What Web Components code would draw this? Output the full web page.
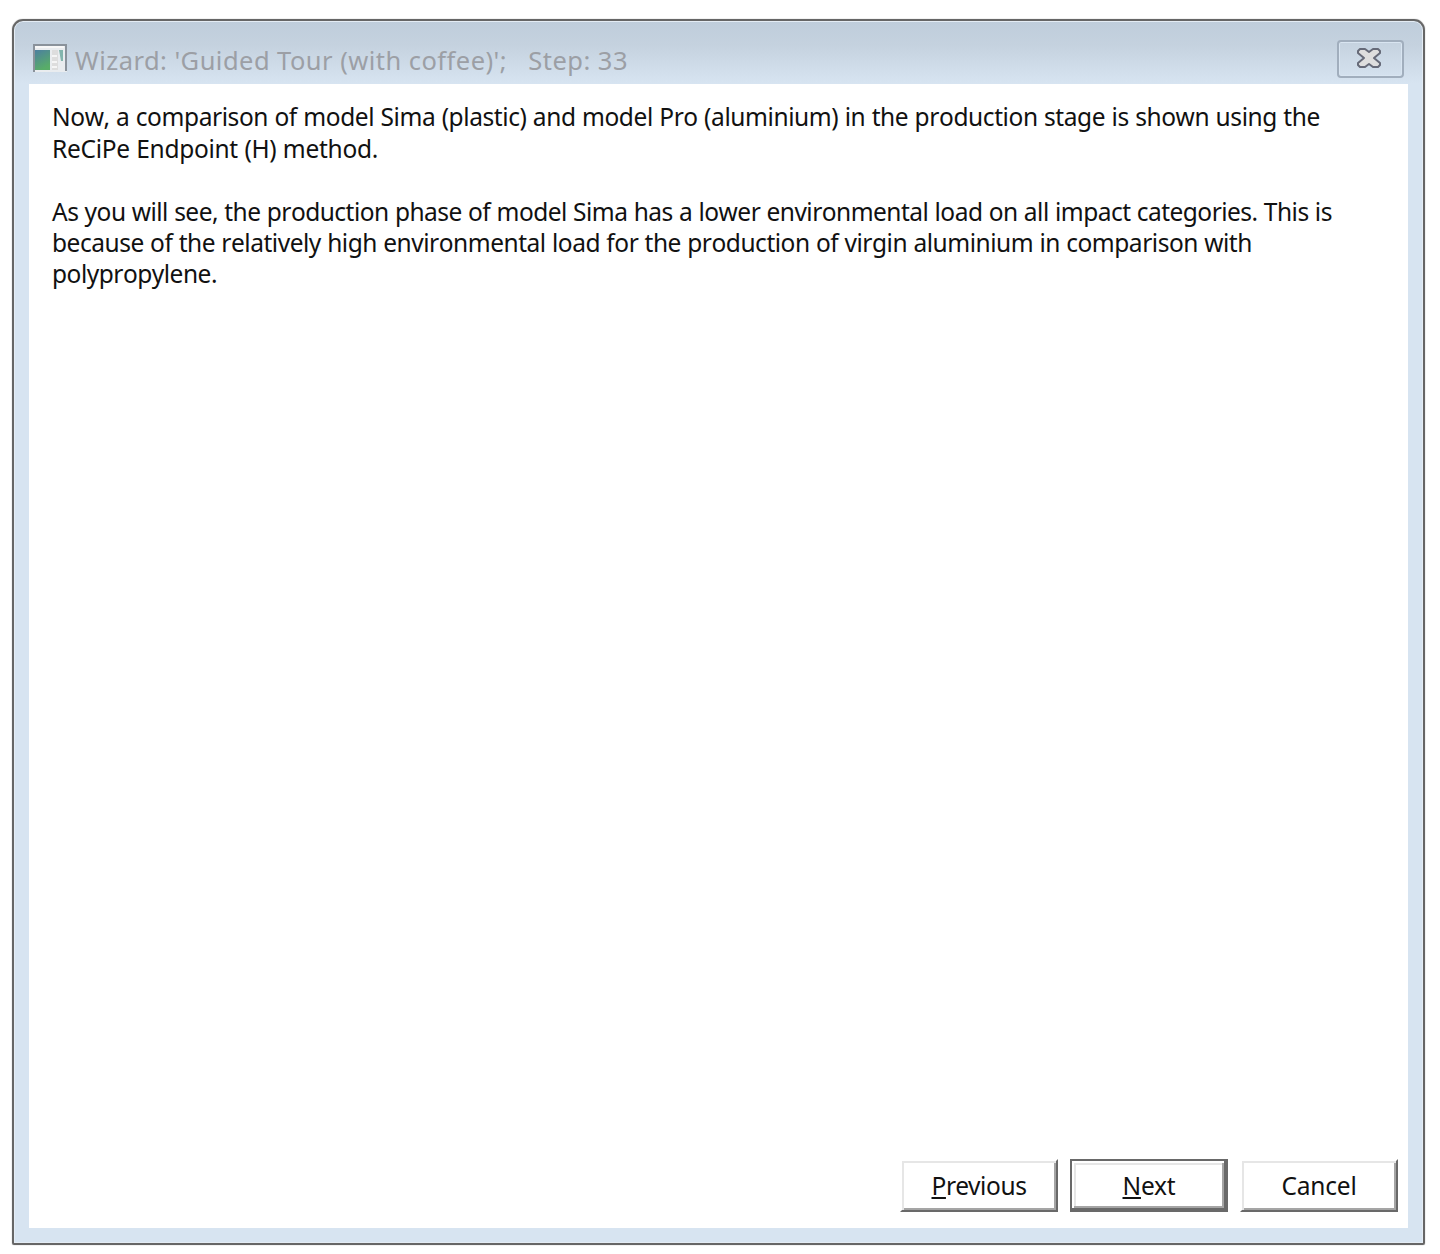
<!DOCTYPE html>
<html lang="en">
<head>
<meta charset="utf-8">
<title>Wizard</title>
<style>
  body {
    background: #ffffff;
    box-sizing: border-box;
    height: 1254px;
    margin: 0;
    overflow: hidden;
    padding: 19px 15px 8px 12px;
  }
</style>
</head>
<body>

<wizard-window>
  <wizard-title slot="title">
    <fit-text width="553">Wizard: 'Guided Tour (with coffee)';   Step: 33</fit-text>
  </wizard-title>
  <wizard-text>
    <fit-text width="1268">Now, a comparison of model Sima (plastic) and model Pro (aluminium) in the production stage is shown using the</fit-text>
    <fit-text width="326">ReCiPe Endpoint (H) method.</fit-text>
    <fit-text></fit-text>
    <fit-text width="1280">As you will see, the production phase of model Sima has a lower environmental load on all impact categories. This is</fit-text>
    <fit-text width="1200">because of the relatively high environmental load for the production of virgin aluminium in comparison with</fit-text>
    <fit-text width="165">polypropylene.</fit-text>
  </wizard-text>
  <wizard-button slot="actions"><fit-text width="95"><u>P</u>revious</fit-text></wizard-button>
  <wizard-button slot="actions" focused><fit-text width="53"><u>N</u>ext</fit-text></wizard-button>
  <wizard-button slot="actions"><fit-text width="75">Cancel</fit-text></wizard-button>
</wizard-window>

<script>
class WizardWindow extends HTMLElement {
  constructor() {
    super();

    const template = document.createElement( 'template' )
    template.innerHTML = /* template */ `
      <style>
        :host {
          background: linear-gradient( #bfcddb 0px, #c5d2df 25px, #d7e4f1 62px );
          border: solid 2px #666666;
          border-radius: 11px 11px 2px 2px;
          box-shadow: inset 0 0 0 1px #e4ecf4, 0 0 1px #777777;
          box-sizing: border-box;
          display: flex;
          flex-direction: column;
          height: 1226px;
          padding: 0 15px 15px 15px;
          width: 1413px;
        }

        header {
          flex: 0 0 63px;
        }

        main {
          background: #ffffff;
          display: flex;
          flex: 1;
          flex-direction: column;
          justify-content: space-between;
        }

        footer {
          display: flex;
          gap: 12px;
          justify-content: flex-end;
          padding: 0 10px 16px 0;
        }
      </style>
      <header><slot name="title"></slot></header>
      <main>
        <slot></slot>
        <footer><slot name="actions"></slot></footer>
      </main>
    `;

    // Root
    this.attachShadow( {mode: 'open'} );
    this.shadowRoot.appendChild( template.content.cloneNode( true ) );
  }
}

class WizardTitle extends HTMLElement {
  constructor() {
    super();

    const template = document.createElement( 'template' )
    template.innerHTML = /* template */ `
      <style>
        :host {
          align-items: flex-start;
          box-sizing: border-box;
          color: #9c9fa5;
          display: flex;
          font: 25.5px/36px "Noto Sans", sans-serif;
          height: 63px;
          padding: 19px 4px 0 4px;
        }

        .icon {
          flex: none;
          height: 28px;
          margin: 4px 8px 0 0;
          width: 34px;
        }

        .label {
          flex: 1;
          padding-top: 2px;
        }

        button {
          align-items: center;
          background: linear-gradient( #c5d2df, #d4e1ee );
          border: solid 2px #a1aebd;
          border-radius: 4px;
          box-shadow: inset 0 0 0 1px #d9e5f1;
          box-sizing: border-box;
          display: flex;
          height: 38px;
          justify-content: center;
          padding: 0 3px 3px 0;
          width: 67px;
        }
      </style>
      <svg class="icon" viewBox="0 0 34 28">
        <defs>
          <linearGradient id="screen" x1="0" y1="0" x2="0.4" y2="1">
            <stop offset="0" stop-color="#4c7fa0"/>
            <stop offset="1" stop-color="#58ad68"/>
          </linearGradient>
        </defs>
        <rect width="34" height="28" fill="#e9ecef"/>
        <rect x="2" y="6" width="15" height="20" fill="url(#screen)"/>
        <rect x="19" y="6" width="6" height="20" fill="#dddddd"/>
        <path d="M19 12h5M19 18h5M19 23h5" stroke="#f5f5f5" stroke-width="2"/>
        <path d="M26 6h4v11h-2z" fill="#83b5ad"/>
        <path d="M1 28V1H33V27" fill="none" stroke="#8a929b" stroke-width="2"/>
        <path d="M2 3H31" stroke="#f7f7f7" stroke-width="2"/>
      </svg>
      <div class="label"><slot></slot></div>
      <button aria-label="Close">
        <svg width="24" height="20" viewBox="0 0 24 20">
          <path d="M3 1H8L12 4L16 1H21L23 3V5L17 10L23 15V17L21 19H16L12 16L8 19H3L1 17V15L7 10L1 5V3Z" fill="#dedede" stroke="#666a78" stroke-width="2" stroke-linejoin="round"/>
        </svg>
      </button>
    `;

    // Root
    this.attachShadow( {mode: 'open'} );
    this.shadowRoot.appendChild( template.content.cloneNode( true ) );
  }
}

class WizardText extends HTMLElement {
  constructor() {
    super();

    const template = document.createElement( 'template' )
    template.innerHTML = /* template */ `
      <style>
        :host {
          color: #111111;
          display: block;
          font: 24.5px/31.4px "Noto Sans", sans-serif;
          font-kerning: none;
          padding: 17.4px 23px 0 23px;
          word-spacing: 0.4px;
        }
      </style>
      <slot></slot>
    `;

    // Root
    this.attachShadow( {mode: 'open'} );
    this.shadowRoot.appendChild( template.content.cloneNode( true ) );
  }
}

class WizardButton extends HTMLElement {
  constructor() {
    super();

    const template = document.createElement( 'template' )
    template.innerHTML = /* template */ `
      <style>
        :host {
          display: block;
        }

        button {
          align-items: center;
          background: #ffffff;
          border: solid 2px;
          border-color: #ffffff #696969 #696969 #ffffff;
          box-shadow: inset 2px 2px 0 #e6e6e6, inset -2px -2px 0 #a5a5a5;
          box-sizing: border-box;
          color: #111111;
          display: flex;
          font: 24.5px/32px "Noto Sans", sans-serif;
          height: 53px;
          justify-content: center;
          padding: 1px 0 0 0;
          width: 158px;
        }

        :host( [focused] ) button {
          border-color: #696969;
          box-shadow: inset -2px -2px 0 #696969, inset 2px 2px 0 #ffffff, inset -4px -4px 0 #a5a5a5, inset 4px 4px 0 #e6e6e6;
        }
      </style>
      <button><slot></slot></button>
    `;

    // Root
    this.attachShadow( {mode: 'open'} );
    this.shadowRoot.appendChild( template.content.cloneNode( true ) );
  }
}

// Single line of text
// Tracking is adjusted to fill the given width
class FitText extends HTMLElement {
  constructor() {
    super();

    const template = document.createElement( 'template' )
    template.innerHTML = /* template */ `
      <style>
        :host {
          display: block;
          min-height: 1lh;
          white-space: pre;
        }

        ::slotted( u ) {
          text-decoration-skip-ink: none;
          text-decoration-thickness: 2px;
          text-underline-offset: 2px;
        }
      </style>
      <span><slot></slot></span>
    `;

    // Root
    this.attachShadow( {mode: 'open'} );
    // No stray whitespace, it would be drawn
    template.content.querySelectorAll( 'style' ).forEach( ( style ) => this.shadowRoot.appendChild( style.cloneNode( true ) ) );
    this.shadowRoot.appendChild( template.content.querySelector( 'span' ).cloneNode( true ) );

    // Elements
    this.$span = this.shadowRoot.querySelector( 'span' );
  }

  // When things change
  _render() {
    if( this.width === null || this.textContent.length === 0 ) {
      return;
    }

    this.$span.style.letterSpacing = '0.001px';
    const natural = this.$span.getBoundingClientRect().width;
    this.$span.style.letterSpacing = `${( this.width - natural ) / this.textContent.length}px`;
  }

  // Setup
  connectedCallback() {
    this._render();
  }

  // Attributes
  // Reflected
  // Boolean, Number, String, null
  get width() {
    return this.hasAttribute( 'width' ) ? parseFloat( this.getAttribute( 'width' ) ) : null;
  }

  set width( value ) {
    if( value !== null ) {
      this.setAttribute( 'width', value );
    } else {
      this.removeAttribute( 'width' );
    }
  }
}

window.customElements.define( 'wizard-window', WizardWindow );
window.customElements.define( 'wizard-title', WizardTitle );
window.customElements.define( 'wizard-text', WizardText );
window.customElements.define( 'wizard-button', WizardButton );
window.customElements.define( 'fit-text', FitText );
</script>
</body>
</html>
